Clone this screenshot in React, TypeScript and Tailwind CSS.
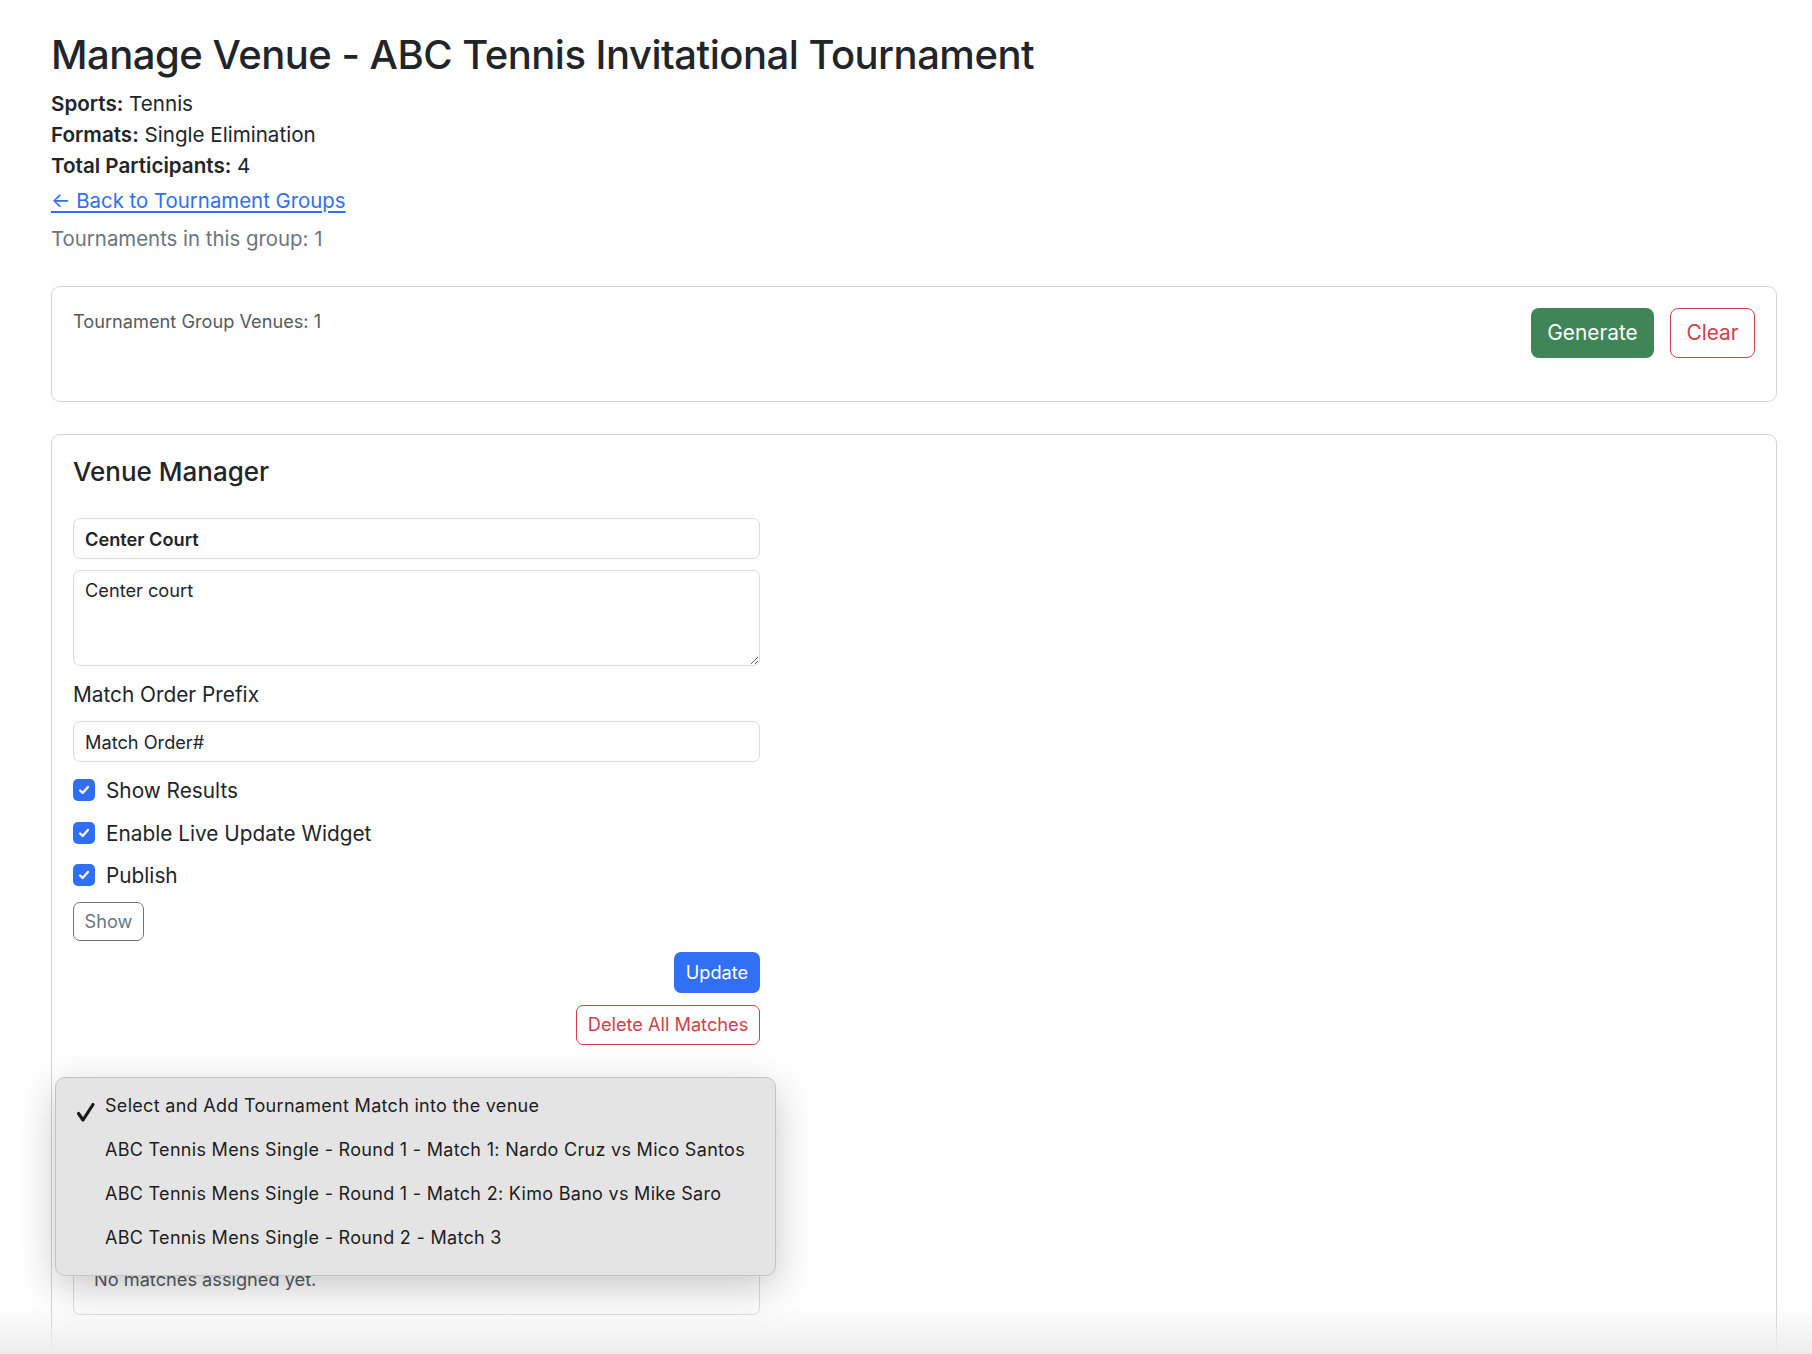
import React from "react";

const FONT = { fontFamily: "Inter, 'Noto Sans', sans-serif" };

const matches = [
  "ABC Tennis Mens Single - Round 1 - Match 1: Nardo Cruz vs Mico Santos",
  "ABC Tennis Mens Single - Round 1 - Match 2: Kimo Bano vs Mike Saro",
  "ABC Tennis Mens Single - Round 2 - Match 3",
];

function CheckRow({ label }: { label: string }) {
  return (
    <label className="flex items-start gap-[11px] leading-[31.2px] text-[20.8px] text-[#212529]">
      <span className="mt-[4px] flex h-[22px] w-[22px] shrink-0 items-center justify-center rounded-[5px] bg-[#2f6ff5]">
        <svg viewBox="0 0 16 16" className="h-[14px] w-[14px]" fill="none">
          <path d="M3.5 8.5l3 3 6-7" stroke="white" strokeWidth="2.6" strokeLinecap="round" strokeLinejoin="round" />
        </svg>
      </span>
      <span>{label}</span>
    </label>
  );
}

function MatchPopup() {
  return (
    <div className="absolute left-[55px] top-[1077px] z-10 w-[721px] rounded-[10px] border border-[#c3c3c3] bg-[#e4e4e4] pt-[5px] pb-[16px] shadow-[0_12px_40px_rgba(0,0,0,0.22)]">
      <svg viewBox="0 0 20 20" className="absolute left-[20px] top-[24px] h-[21px] w-[20px]" fill="none">
        <path d="M2.5 11l4.5 6.5L17 2" stroke="#1a1a1a" strokeWidth="3.2" strokeLinecap="round" strokeLinejoin="round" />
      </svg>
      {["Select and Add Tournament Match into the venue", ...matches].map((m) => (
        <div key={m} className="flex h-[44px] items-center pl-[49px] text-[18px] tracking-[0.3px] text-[#1d1d1d]">
          {m}
        </div>
      ))}
    </div>
  );
}

export default function App() {
  return (
    <div style={FONT} className="relative h-[1354px] w-full overflow-hidden bg-white text-[#212529]">
      <div className="pl-[51px] pr-[35px] pt-[30px]">
        <h1 className="text-[40px] font-medium leading-[50px] tracking-[-0.5px]">
          Manage Venue - ABC Tennis Invitational Tournament
        </h1>
        <div className="mt-[8px] text-[20.6px] leading-[31.2px]">
          <p>
            <b className="font-semibold">Sports:</b> Tennis
          </p>
          <p>
            <b className="font-semibold">Formats:</b> Single Elimination
          </p>
          <p>
            <b className="font-semibold">Total Participants:</b> 4
          </p>
        </div>
        <a href="#" className="mt-[3px] block w-fit text-[20.4px] leading-[31.2px] text-[#2f6ff0] underline underline-offset-[3px]">
          ← Back to Tournament Groups
        </a>
        <p className="mt-[7px] text-[20.4px] leading-[31.2px] text-[#6c757d]">Tournaments in this group: 1</p>

        <div className="mt-[32px] flex h-[116px] items-start justify-between rounded-[9px] border border-[#d4d4d4] px-[21px] pt-[21px]">
          <p className="text-[18.2px] leading-[27.3px] text-[#555b61]">Tournament Group Venues: 1</p>
          <div className="flex gap-[16px]">
            <button className="h-[50px] w-[123px] rounded-[8px] bg-[#408558] text-[20.8px] text-white">Generate</button>
            <button className="h-[50px] w-[85px] rounded-[8px] border border-[#d0404c] text-[20.8px] text-[#d0404c]">Clear</button>
          </div>
        </div>

        <div className="mt-[32px] h-[1000px] rounded-[9px] border border-[#d4d4d4] px-[21px] pt-[21px]">
          <h5 className="text-[26px] font-medium leading-[31.2px]">Venue Manager</h5>
          <div className="mt-[31px] flex w-[687px] flex-col">
            <input
              readOnly
              value="Center Court"
              className="h-[41px] w-full rounded-[7px] border border-[#dcdcdc] px-[11px] text-[18.2px] font-semibold text-[#212529] outline-none"
            />
            <textarea
              readOnly
              value="Center court"
              className="mt-[11px] h-[96px] w-full rounded-[7px] border border-[#dcdcdc] px-[11px] pt-[6px] text-[18.2px] leading-[27.3px] text-[#212529] outline-none"
            />
            <label className="mt-[13px] text-[20.8px] leading-[31.2px]">Match Order Prefix</label>
            <input
              readOnly
              value="Match Order#"
              className="mt-[11px] h-[41px] w-full rounded-[7px] border border-[#dcdcdc] px-[11px] text-[18.2px] text-[#212529] outline-none"
            />
            <div className="mt-[12.5px] flex flex-col gap-[11.4px]">
              <CheckRow label="Show Results" />
              <CheckRow label="Enable Live Update Widget" />
              <CheckRow label="Publish" />
            </div>
            <button className="mt-[10.5px] h-[39px] w-[71px] rounded-[7px] border border-[#6c757d] text-[18.2px] text-[#6c757d]">
              Show
            </button>
            <div className="mt-[11px] flex flex-col items-end gap-[12px]">
              <button className="h-[41px] w-[86px] rounded-[7px] bg-[#316ff6] text-[18.2px] text-white">Update</button>
              <button className="h-[40px] w-[184px] rounded-[7px] border border-[#d0404c] text-[18.2px] text-[#d0404c]">
                Delete All Matches
              </button>
            </div>
            <select className="mt-[40px] h-[40px] w-full rounded-[7px] border border-[#dcdcdc] px-[11px] text-[18.2px]">
              <option>Select and Add Tournament Match into the venue</option>
            </select>
            <div className="mt-[119px] rounded-[7px] border border-[#dcdcdc] px-[20px] py-[21px] text-[18.2px] leading-[27.3px] text-[#555b61]">
              No matches assigned yet.
            </div>
          </div>
        </div>
      </div>

      <MatchPopup />
      <div className="pointer-events-none absolute inset-x-0 bottom-0 h-[48px] bg-gradient-to-b from-white/0 to-[#ececec]" />
    </div>
  );
}
